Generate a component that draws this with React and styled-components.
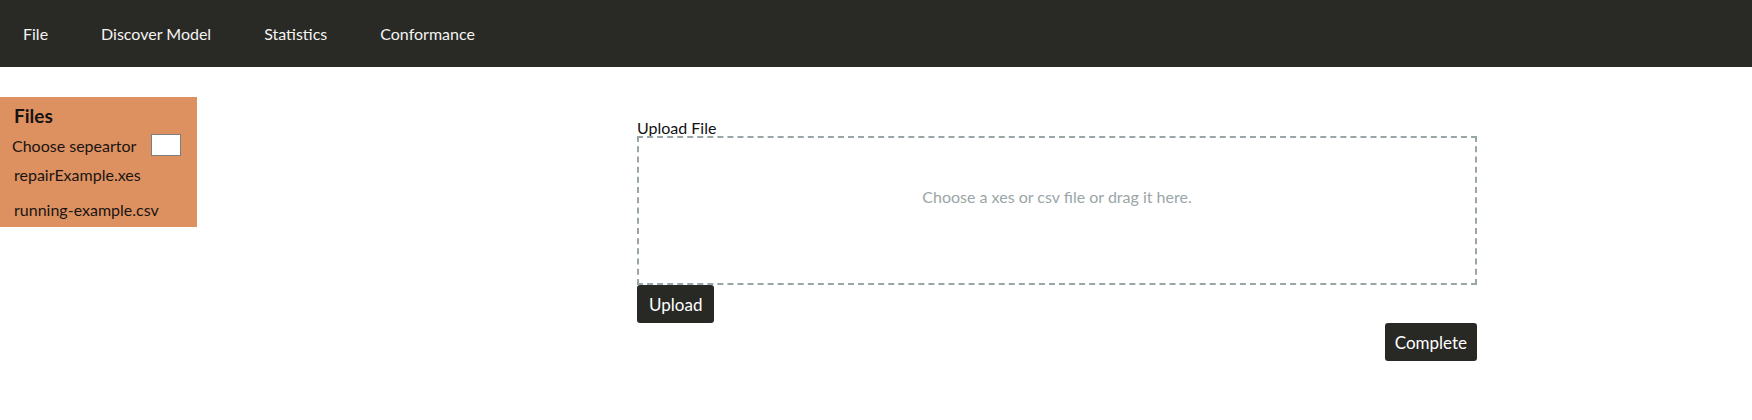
import React, { useState } from 'react';
import styled, { createGlobalStyle } from 'styled-components';

const GlobalStyle = createGlobalStyle`
  * {
    margin: 0;
    padding: 0;
    box-sizing: border-box;
  }

  body {
    font-family: Lato, 'Liberation Sans', sans-serif;
    background: #ffffff;
    color: #111;
  }
`;

const NavBar = styled.nav`
  height: 67px;
  background: #292a26;
  display: flex;
  align-items: center;
  padding-left: 23px;
  gap: 53px;
`;

const NavItem = styled.a`
  color: #f4f4f2;
  font-size: 16px;
  text-decoration: none;
  cursor: pointer;
`;

const Body = styled.div`
  display: flex;
  align-items: flex-start;
  padding-top: 30px;
`;

const Sidebar = styled.aside`
  width: 197px;
  background: #dd9161;
  padding: 8px 13px 8px 12px;
  display: flex;
  flex-direction: column;
`;

const SideTitle = styled.h3`
  font-size: 19px;
  font-weight: 700;
  color: #151210;
  line-height: 22px;
  padding-left: 2px;
`;

const SepRow = styled.div`
  display: flex;
  align-items: center;
  justify-content: space-between;
  margin-top: 7px;
  font-size: 16px;
  color: #1a1411;
`;

const SepInput = styled.input`
  width: 30px;
  height: 22px;
  border: 1px solid #7d7d7d;
  background: #fff;
  margin-right: 3px;
`;

const FileItem = styled.div`
  font-size: 16px;
  color: #1a1411;
  padding-left: 2px;
  margin-top: ${p => p.gap}px;
  cursor: pointer;
`;

const Main = styled.main`
  margin-left: 440px;
  width: 840px;
  padding-top: 22px;
  display: flex;
  flex-direction: column;
`;

const Label = styled.label`
  font-size: 16px;
  color: #111;
  line-height: 17px;
`;

const DropZone = styled.div`
  height: 149px;
  border: 2px dashed #9aa5a8;
  display: flex;
  align-items: center;
  justify-content: center;
  color: #9aa5a8;
  font-size: 16px;
  padding-bottom: 28px;
`;

const Button = styled.button`
  background: #282825;
  color: #ffffff;
  border: none;
  border-radius: 3px;
  font-family: Lato, 'Liberation Sans', sans-serif;
  font-size: 17px;
  height: 38px;
  padding: 0 ${p => p.pad}px;
  cursor: pointer;
`;

const Actions = styled.div`
  display: flex;
  flex-direction: column;
  align-items: flex-start;
`;

const RightRow = styled.div`
  align-self: flex-end;
`;

function App() {
  const [sep, setSep] = useState('');

  return (
    <>
      <GlobalStyle />
      <NavBar>
        <NavItem>File</NavItem>
        <NavItem>Discover Model</NavItem>
        <NavItem>Statistics</NavItem>
        <NavItem>Conformance</NavItem>
      </NavBar>
      <Body>
        <Sidebar>
          <SideTitle>Files</SideTitle>
          <SepRow>
            <span>Choose sepeartor</span>
            <SepInput value={sep} onChange={e => setSep(e.target.value)} />
          </SepRow>
          <FileItem gap={9}>repairExample.xes</FileItem>
          <FileItem gap={16}>running-example.csv</FileItem>
        </Sidebar>
        <Main>
          <Label>Upload File</Label>
          <DropZone>Choose a xes or csv file or drag it here.</DropZone>
          <Actions>
            <Button pad={12}>Upload</Button>
            <RightRow>
              <Button pad={10}>Complete</Button>
            </RightRow>
          </Actions>
        </Main>
      </Body>
    </>
  );
}

export default App;
